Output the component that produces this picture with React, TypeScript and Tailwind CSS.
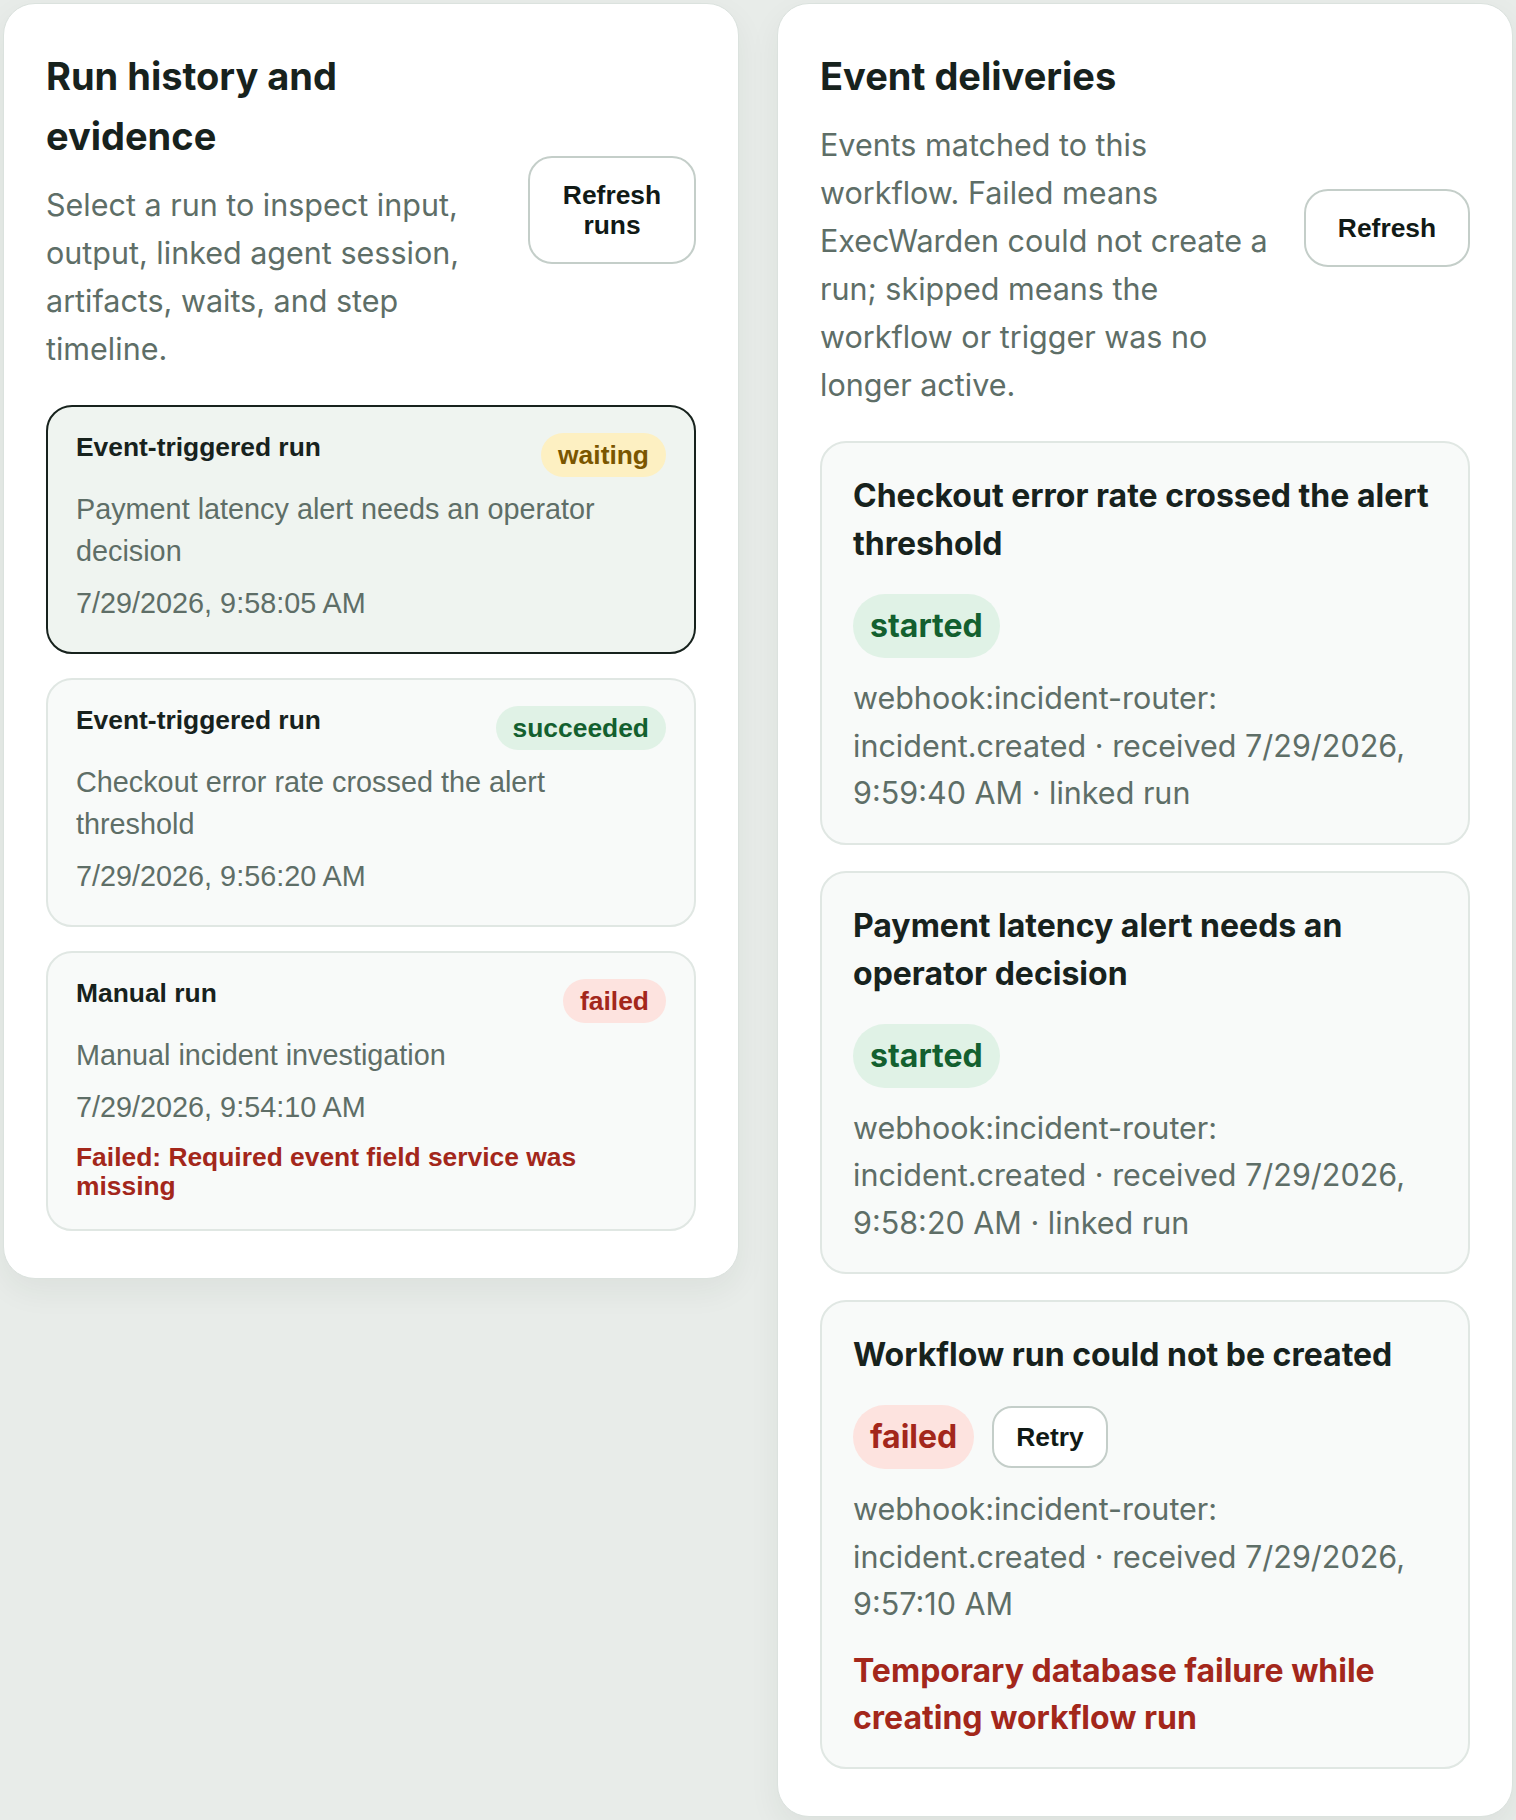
import clsx from "clsx";

type RunStatus = "waiting" | "succeeded" | "failed";
type DeliveryStatus = "started" | "failed";

interface Run {
  id: string;
  kind: string;
  status: RunStatus;
  summary: string;
  at: string;
  error?: string;
}

interface Delivery {
  id: string;
  title: string;
  status: DeliveryStatus;
  source: string;
  type: string;
  received: string;
  linkedRun?: boolean;
  error?: string;
}

const runs: Run[] = [
  {
    id: "run_3",
    kind: "Event-triggered run",
    status: "waiting",
    summary: "Payment latency alert needs an operator decision",
    at: "7/29/2026, 9:58:05 AM",
  },
  {
    id: "run_2",
    kind: "Event-triggered run",
    status: "succeeded",
    summary: "Checkout error rate crossed the alert threshold",
    at: "7/29/2026, 9:56:20 AM",
  },
  {
    id: "run_1",
    kind: "Manual run",
    status: "failed",
    summary: "Manual incident investigation",
    at: "7/29/2026, 9:54:10 AM",
    error: "Failed: Required event field service was missing",
  },
];

const deliveries: Delivery[] = [
  {
    id: "evt_3",
    title: "Checkout error rate crossed the alert threshold",
    status: "started",
    source: "webhook:incident-router:",
    type: "incident.created",
    received: "7/29/2026, 9:59:40 AM",
    linkedRun: true,
  },
  {
    id: "evt_2",
    title: "Payment latency alert needs an operator decision",
    status: "started",
    source: "webhook:incident-router:",
    type: "incident.created",
    received: "7/29/2026, 9:58:20 AM",
    linkedRun: true,
  },
  {
    id: "evt_1",
    title: "Workflow run could not be created",
    status: "failed",
    source: "webhook:incident-router:",
    type: "incident.created",
    received: "7/29/2026, 9:57:10 AM",
    error: "Temporary database failure while creating workflow run",
  },
];

const statusTone: Record<RunStatus | DeliveryStatus, string> = {
  waiting: "bg-[#fdf0c2] text-[#7a5600]",
  succeeded: "bg-[#e0f2e6] text-[#13602f]",
  started: "bg-[#e0f2e6] text-[#13602f]",
  failed: "bg-[#fde3df] text-[#a3271b]",
};

// buttons keep the platform sans, everything else uses the app font
const buttonFont = "font-['Liberation_Sans',Arial,Helvetica,sans-serif]";

function Panel({ children }: { children: React.ReactNode }) {
  return (
    <section className="rounded-[32px] border-[1.5px] border-[#dbe2de] bg-white px-[42px] pt-[42px] pb-[47px] shadow-[0_12px_32px_rgba(30,50,40,0.06)]">
      {children}
    </section>
  );
}

function PanelHeader({
  title,
  description,
  action,
  actionWidth,
}: {
  title: string;
  description: string;
  action: string;
  actionWidth: string;
}) {
  return (
    <div className="flex items-center gap-[26px]">
      <div className="min-w-0 flex-1">
        <h2 className="text-[38px] font-bold leading-[60px] text-[#17221d]">
          {title}
        </h2>
        <p className="mt-[15px] text-[30.5px] leading-[48px] text-[#5e6e67]">
          {description}
        </p>
      </div>
      <button
        type="button"
        className={clsx(
          "shrink-0 rounded-[24px] border-2 border-[#c4cec9] bg-white px-[20px] py-[22px] text-center text-[26.4px] font-bold leading-[30px] text-[#111a16]",
          buttonFont,
          actionWidth,
        )}
      >
        {action}
      </button>
    </div>
  );
}

function RunCard({ run, selected }: { run: Run; selected: boolean }) {
  return (
    <button
      type="button"
      className={clsx(
        "block w-full rounded-[26px] border-2 px-[28px] pt-[26px] pb-[28px] text-left",
        buttonFont,
        selected
          ? "border-[#17221d] bg-[#eff4f0]"
          : "border-[#e0e7e3] bg-[#f8faf9]",
      )}
    >
      <div className="flex items-start justify-between gap-4">
        <span className="text-[26.4px] font-bold leading-[28px] text-[#17221d]">
          {run.kind}
        </span>
        <span
          className={clsx(
            "shrink-0 rounded-full px-[17px] py-[6px] text-[26.4px] font-bold leading-[32px]",
            statusTone[run.status],
          )}
        >
          {run.status}
        </span>
      </div>
      <p className="mt-[11px] text-[28.8px] leading-[42px] text-[#5e6e67]">
        {run.summary}
      </p>
      <p className="mt-[10px] text-[28.8px] leading-[42px] text-[#5e6e67]">
        {run.at}
      </p>
      {run.error && (
        <p className="mt-[15px] text-[26.4px] font-bold leading-[29px] text-[#a3271b]">
          {run.error}
        </p>
      )}
    </button>
  );
}

function DeliveryCard({ delivery }: { delivery: Delivery }) {
  const detail = `${delivery.type} · received ${delivery.received}${
    delivery.linkedRun ? " · linked run" : ""
  }`;

  return (
    <div className="rounded-[26px] border-2 border-[#e0e7e3] bg-[#f8faf9] px-[31px] pt-[29px] pb-[26px]">
      <h3 className="text-[32px] font-bold leading-[48px] text-[#17221d]">
        {delivery.title}
      </h3>
      <div className="mt-[26px] flex items-center gap-[18px]">
        <span
          className={clsx(
            "rounded-full px-[17px] py-[8px] text-[32px] font-bold leading-[48px]",
            statusTone[delivery.status],
          )}
        >
          {delivery.status}
        </span>
        {delivery.status === "failed" && (
          <button
            type="button"
            className={clsx(
              "rounded-[20px] border-2 border-[#c4cec9] bg-white px-[22px] py-[14px] text-[26.4px] font-bold leading-[30px] text-[#111a16]",
              buttonFont,
            )}
          >
            Retry
          </button>
        )}
      </div>
      {/* break after the source prefix so the event type starts its own line */}
      <p className="mt-[16px] text-[30.5px] leading-[47.5px] text-[#5e6e67]">
        {delivery.source}
        <wbr />
        {detail}
      </p>
      {delivery.error && (
        <p className="mt-[19px] text-[32px] font-bold leading-[47px] text-[#a3271b]">
          {delivery.error}
        </p>
      )}
    </div>
  );
}

export default function App() {
  const selectedRun = runs[0].id;

  return (
    <div className="min-h-screen bg-[#e8ece9] px-[3px] pt-[3px] pb-[3px] font-['Inter',sans-serif] antialiased">
      <div className="grid grid-cols-2 items-start gap-[38px]">
        <Panel>
          <PanelHeader
            title="Run history and evidence"
            description="Select a run to inspect input, output, linked agent session, artifacts, waits, and step timeline."
            action="Refresh runs"
            actionWidth="w-[168px]"
          />
          <div className="mt-[32px] flex flex-col gap-[24px]">
            {runs.map((run) => (
              <RunCard key={run.id} run={run} selected={run.id === selectedRun} />
            ))}
          </div>
        </Panel>

        <Panel>
          <PanelHeader
            title="Event deliveries"
            description="Events matched to this workflow. Failed means ExecWarden could not create a run; skipped means the workflow or trigger was no longer active."
            action="Refresh"
            actionWidth="w-[166px]"
          />
          <div className="mt-[32px] flex flex-col gap-[26px]">
            {deliveries.map((d) => (
              <DeliveryCard key={d.id} delivery={d} />
            ))}
          </div>
        </Panel>
      </div>
    </div>
  );
}
